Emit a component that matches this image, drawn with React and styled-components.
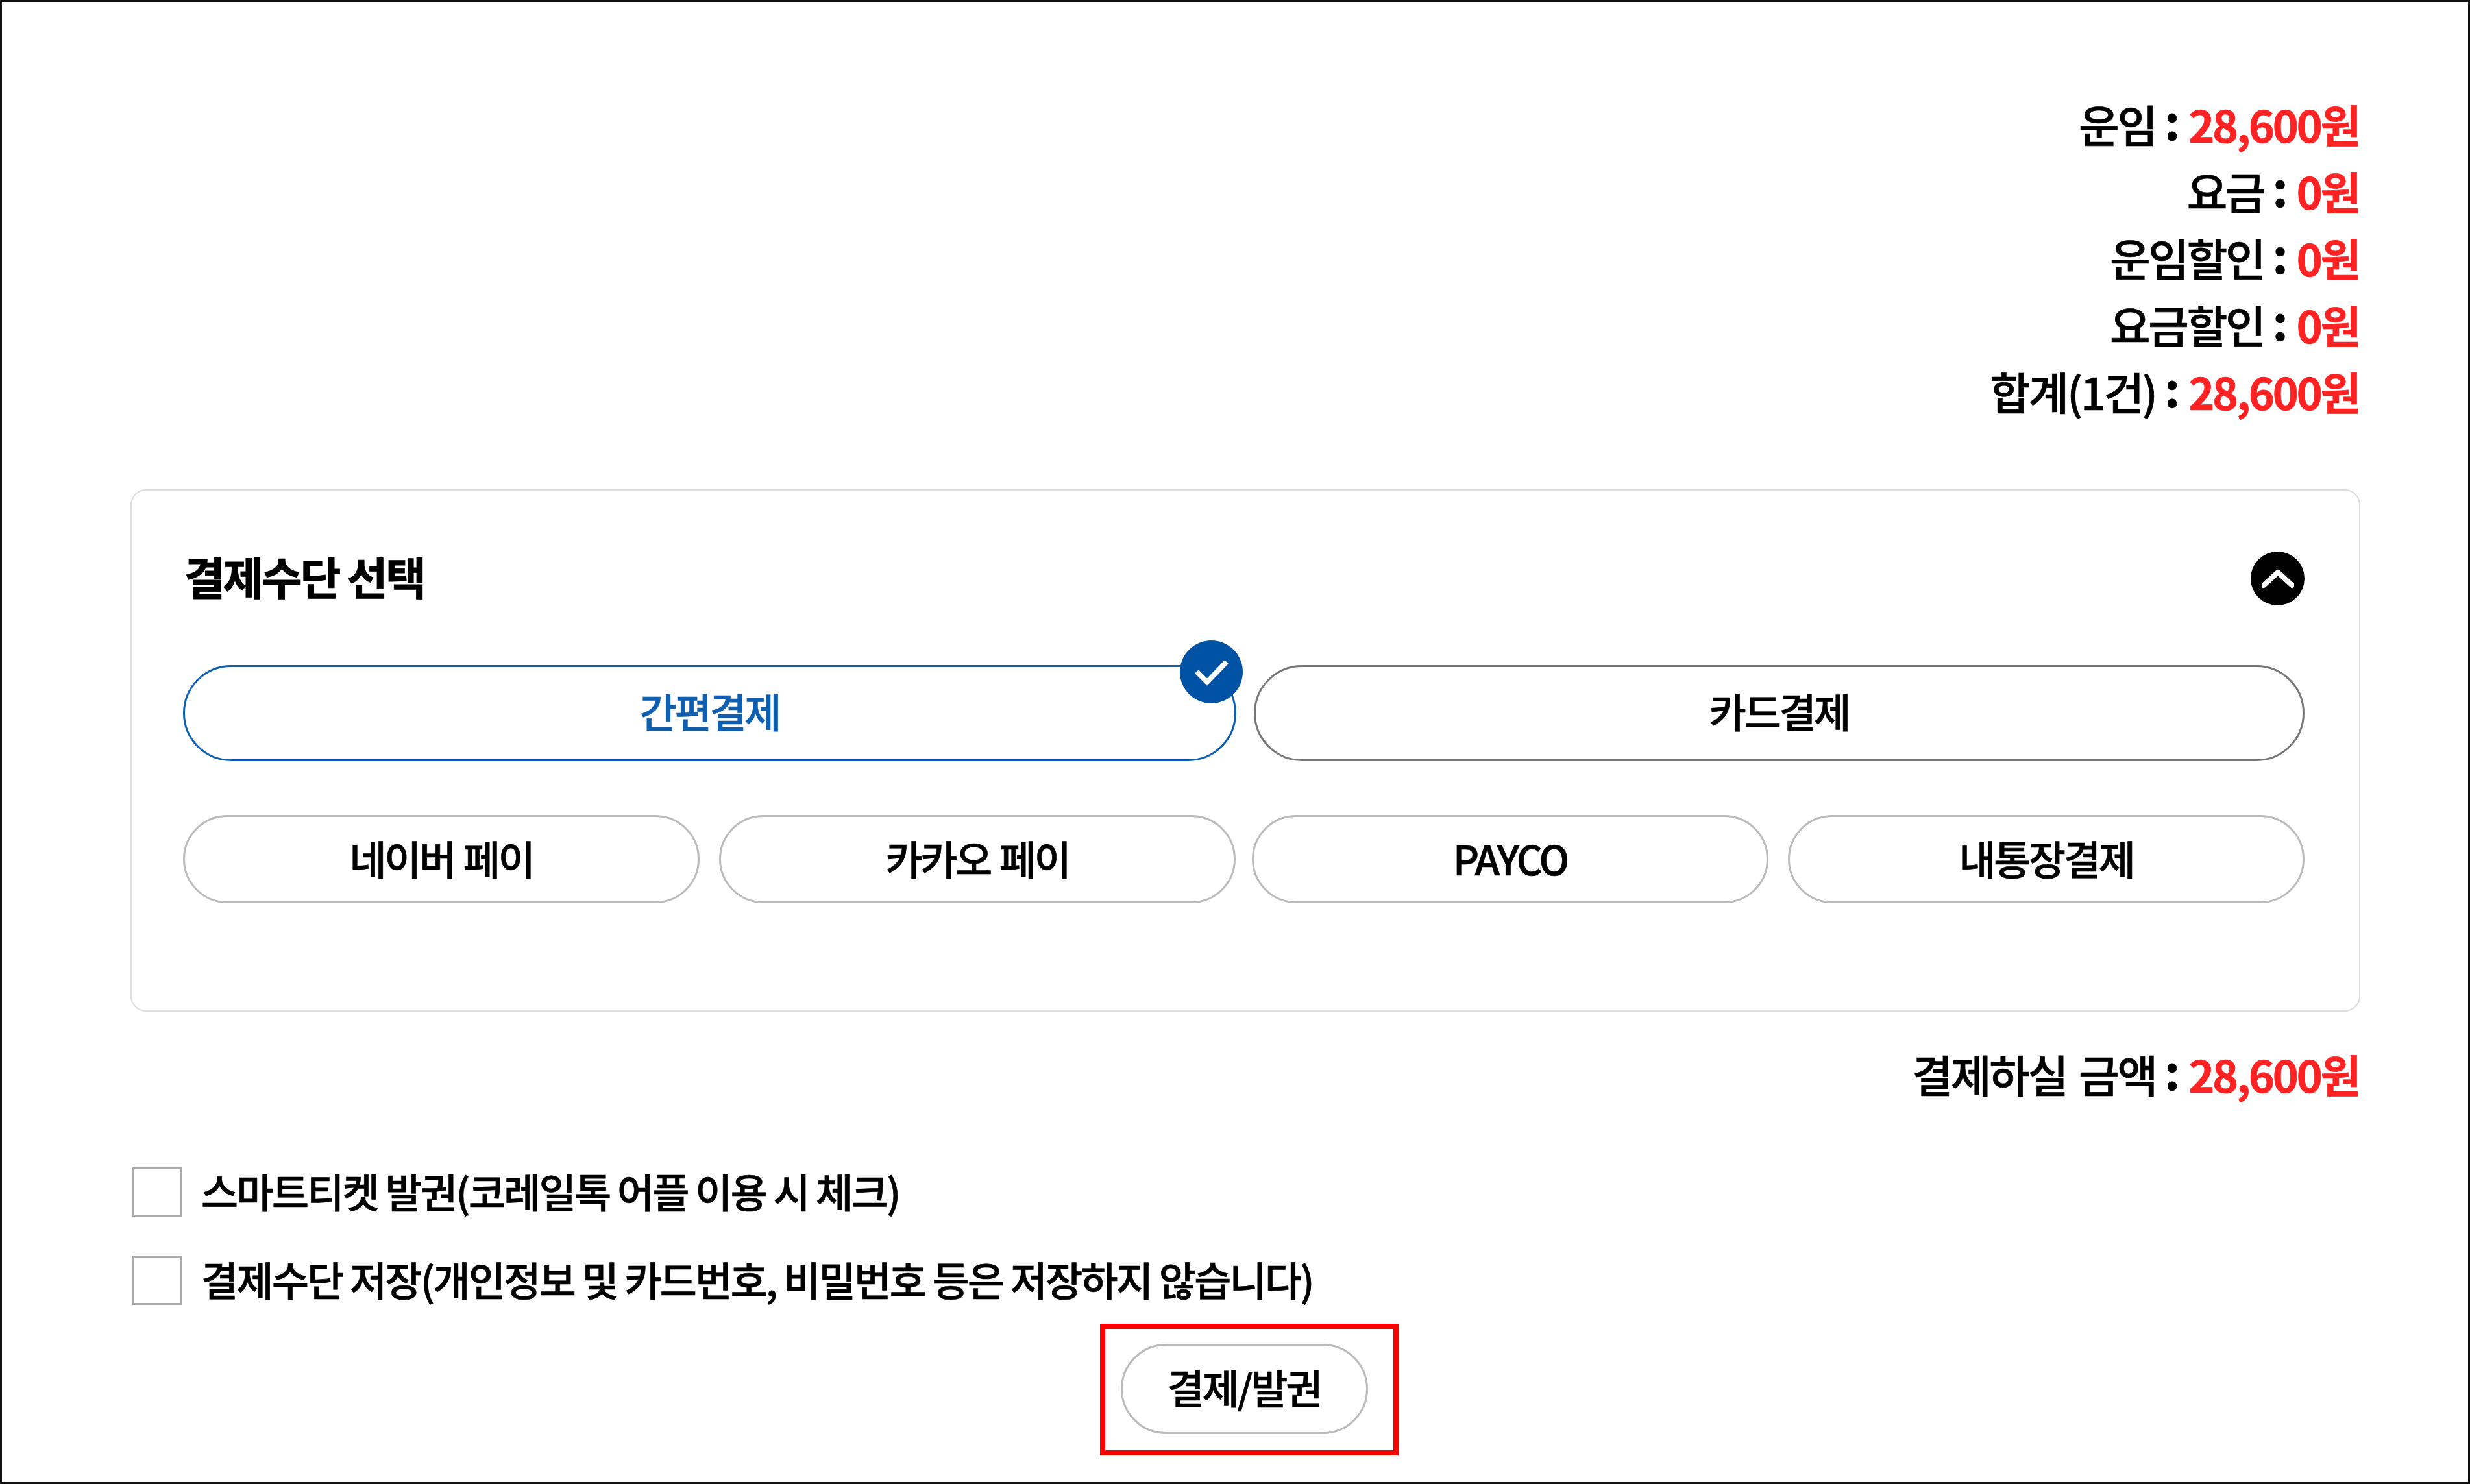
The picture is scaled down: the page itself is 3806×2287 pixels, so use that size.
import React from "react";
import styled, { createGlobalStyle } from "styled-components";

const GlobalStyle = createGlobalStyle`
  html, body {
    margin: 0;
    padding: 0;
    background: #fff;
  }
  body {
    font-family: "Noto Sans CJK KR", "Noto Sans", sans-serif;
    color: #000;
  }
`;

const Frame = styled.div`
  box-sizing: border-box;
  width: 3806px;
  height: 2287px;
  border: 3px solid #111;
  padding: 140px 166px 0 198px;
`;

const Summary = styled.div`
  display: flex;
  flex-direction: column;
  align-items: flex-end;
  padding-right: 2px;
`;

const PriceRow = styled.div`
  height: 103px;
  line-height: 95px;
  font-size: 68px;
  font-weight: 500;
  letter-spacing: -3.2px;
  white-space: nowrap;
  -webkit-text-stroke: 0.7px #000;
`;

const Colon = styled.span`
  margin: 0 1px;
  font-size: 74px;
  font-weight: 700;
  line-height: 0;
  letter-spacing: 0;
  vertical-align: 4px;
`;

const Price = styled.span`
  color: #ff2222;
  font-weight: 700;
  -webkit-text-stroke: 0.7px #ff2222;
`;

const Card = styled.section`
  box-sizing: border-box;
  height: 805px;
  margin-top: 96px;
  padding: 94px 84px 0 79px;
  border: 2px solid #ddd;
  border-radius: 24px;
`;

const CardHead = styled.div`
  display: flex;
  align-items: center;
  justify-content: space-between;
  height: 83px;
`;

const Title = styled.h2`
  margin: 0 0 0 2px;
  padding-bottom: 8px;
  font-size: 68px;
  font-weight: 700;
  letter-spacing: -3px;
  -webkit-text-stroke: 1px #000;
`;

const Toggle = styled.button`
  display: flex;
  align-items: center;
  justify-content: center;
  width: 83px;
  height: 83px;
  padding: 0;
  border: 0;
  border-radius: 50%;
  background: #000;
`;

const TabRow = styled.div`
  display: grid;
  grid-template-columns: 1623px 1fr;
  gap: 27px;
  margin-top: 92px;
`;

const MethodRow = styled.div`
  display: flex;
  gap: 25px;
  margin-top: 83px;
`;

const MethodPair = styled.div`
  flex: 1;
  display: grid;
  grid-template-columns: repeat(2, 1fr);
  gap: 30px;
`;

const Pill = styled.button`
  position: relative;
  box-sizing: border-box;
  height: ${(p) => (p.$large ? "148px" : "136px")};
  padding: 0 0 ${(p) => (p.$large ? "8px" : "5px")};
  background: #fff;
  border: 3px solid ${(p) => (p.$active ? "#0f5fb0" : p.$large ? "#777" : "#bbb")};
  border-radius: 80px;
  color: ${(p) => (p.$active ? "#0f5fb0" : "#000")};
  font-family: inherit;
  font-size: 62px;
  font-weight: 500;
  letter-spacing: -3.2px;
  word-spacing: 3px;
  -webkit-text-stroke: 0.7px ${(p) => (p.$active ? "#0f5fb0" : "#000")};
`;

const Badge = styled.span`
  position: absolute;
  top: -41px;
  right: -13px;
  display: flex;
  align-items: center;
  justify-content: center;
  width: 97px;
  height: 97px;
  border-radius: 50%;
  background: #0052a4;
`;

const Total = styled(PriceRow)`
  margin-top: 48px;
  padding-right: 2px;
  text-align: right;
`;

const TotalLabel = styled.span`
  word-spacing: 7px;
`;

const Options = styled.div`
  display: flex;
  flex-direction: column;
  gap: 60px;
  margin-top: 89px;
`;

const Option = styled.label`
  display: flex;
  align-items: center;
  gap: 30px;
  height: 76px;
  font-size: 62px;
  font-weight: 500;
  letter-spacing: -2.6px;
  white-space: nowrap;
  -webkit-text-stroke: 0.7px #000;
`;

const OptionText = styled.span`
  line-height: 72px;
  height: 76px;
`;

const Check = styled.input`
  appearance: none;
  box-sizing: border-box;
  width: 76px;
  height: 76px;
  margin: 0 0 0 3px;
  background: #fff;
  border: 3px solid #aaa;
`;

const Footer = styled.div`
  display: flex;
  justify-content: center;
  margin-top: 29px;
  padding-left: 11px;
`;

const Highlight = styled.div`
  padding: 23px 39px 25px 24px;
  border: 8px solid #f00;
`;

const Submit = styled.button`
  display: block;
  box-sizing: border-box;
  width: 381px;
  height: 139px;
  padding: 0 0 8px;
  background: #fff;
  border: 3px solid #bbb;
  border-radius: 70px;
  font-family: inherit;
  font-size: 62px;
  font-weight: 500;
  letter-spacing: -3.2px;
  -webkit-text-stroke: 0.7px #000;
`;

const fees = [
  ["운임", "28,600원"],
  ["요금", "0원"],
  ["운임할인", "0원"],
  ["요금할인", "0원"],
  ["합계(1건)", "28,600원"],
];

const methodPairs = [
  ["네이버 페이", "카카오 페이"],
  ["PAYCO", "내통장결제"],
];

export default function App() {
  return (
    <>
      <GlobalStyle />
      <Frame>
        <Summary>
          {fees.map(([label, price]) => (
            <PriceRow key={label}>
              {label} <Colon>:</Colon> <Price>{price}</Price>
            </PriceRow>
          ))}
        </Summary>

        <Card>
          <CardHead>
            <Title>결제수단 선택</Title>
            <Toggle aria-label="접기">
              <svg width="50" height="30" viewBox="0 0 50 30" fill="none">
                <path d="M3 25 L25 5 L47 25" stroke="#fff" strokeWidth="8" strokeLinecap="round" strokeLinejoin="round" />
              </svg>
            </Toggle>
          </CardHead>
          <TabRow>
            <Pill $large $active>
              간편결제
              <Badge>
                <svg width="52" height="42" viewBox="0 0 52 42" fill="none">
                  <path d="M3 20 L19 36 L49 5" stroke="#fff" strokeWidth="8" />
                </svg>
              </Badge>
            </Pill>
            <Pill $large>카드결제</Pill>
          </TabRow>
          <MethodRow>
            {methodPairs.map((pair) => (
              <MethodPair key={pair[0]}>
                {pair.map((name) => (
                  <Pill key={name}>{name}</Pill>
                ))}
              </MethodPair>
            ))}
          </MethodRow>
        </Card>

        <Total>
          <TotalLabel>결제하실 금액</TotalLabel> <Colon>:</Colon> <Price>28,600원</Price>
        </Total>

        <Options>
          <Option>
            <Check type="checkbox" />
            <OptionText>스마트티켓 발권(코레일톡 어플 이용 시 체크)</OptionText>
          </Option>
          <Option>
            <Check type="checkbox" />
            <OptionText>결제수단 저장(개인정보 및 카드번호, 비밀번호 등은 저장하지 않습니다)</OptionText>
          </Option>
        </Options>

        <Footer>
          <Highlight>
            <Submit>결제/발권</Submit>
          </Highlight>
        </Footer>
      </Frame>
    </>
  );
}
